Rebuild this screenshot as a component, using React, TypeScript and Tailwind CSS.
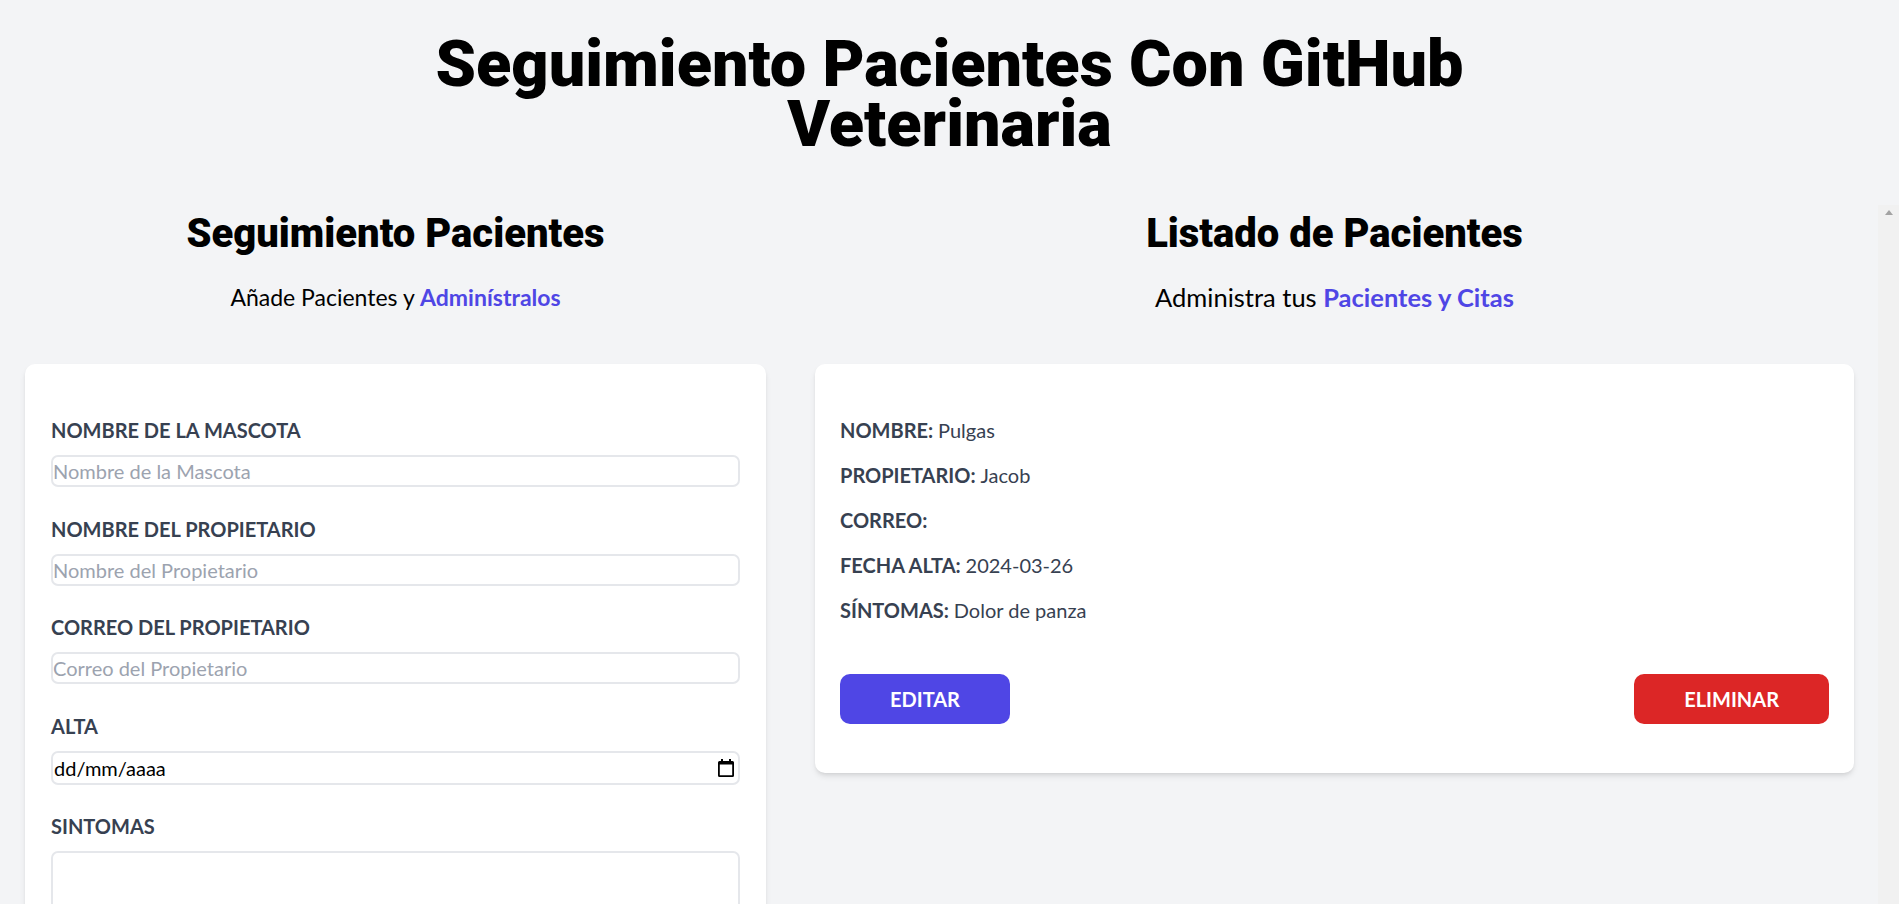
import type { ReactNode } from 'react';

function Field({ label, children, last }: { label: string; children: ReactNode; last?: boolean }) {
  return (
    <div className={last ? '' : 'mb-[27.5px]'}>
      <label className="block h-[29px] text-[20px] leading-[29px] font-bold uppercase text-[#374151]">{label}</label>
      <div className="mt-[10px]">{children}</div>
    </div>
  );
}

function TextInput({ placeholder }: { placeholder: string }) {
  return (
    <input
      type="text"
      placeholder={placeholder}
      className="block h-[32px] w-full rounded-[7px] border-2 border-[#e5e7eb] bg-white px-0 text-[20px] text-black placeholder-[#9ca3af] outline-none"
    />
  );
}

function CalendarIcon() {
  return (
    <svg width="16" height="18" viewBox="0 0 16 18" aria-hidden="true">
      <path
        fillRule="evenodd"
        fill="#000"
        d="M3 0h2v2h6V0h2v2h1.5A1.5 1.5 0 0 1 16 3.5v13a1.5 1.5 0 0 1-1.5 1.5h-13A1.5 1.5 0 0 1 0 16.5v-13A1.5 1.5 0 0 1 1.5 2H3z M1.8 5.5v10.7h12.4V5.5z"
      />
    </svg>
  );
}

function Row({ label, value }: { label: string; value?: string }) {
  return (
    <p className="text-[20px] leading-[29px] text-[#374151]">
      <span className="font-bold uppercase">{label}: </span>
      {value}
    </p>
  );
}

export default function App() {
  return (
    <div className="h-[904px] overflow-hidden bg-[#f3f4f6] font-['Lato',sans-serif] text-black">
      <h1 className="pt-[34px] text-center font-['Roboto',sans-serif] text-[64.8px] leading-[60px] font-black">
        Seguimiento Pacientes Con GitHub
        <br />
        Veterinaria
      </h1>

      <div className="mt-[51px] flex">
        {/* formulario */}
        <div className="w-[791px] shrink-0 px-[25px]">
          <h2 className="pt-[7px] text-center font-['Roboto',sans-serif] text-[40px] leading-[43px] font-black">Seguimiento Pacientes</h2>
          <p className="mt-[25px] text-center text-[23px] leading-[34px]">
            Añade Pacientes y <span className="font-bold text-[#4f46e5]">Adminístralos</span>
          </p>
          <form className="mt-[50px] rounded-[10px] bg-white px-[26px] pt-[52px] pb-12 shadow-md">
            <Field label="Nombre de la Mascota">
              <TextInput placeholder="Nombre de la Mascota" />
            </Field>
            <Field label="Nombre del Propietario">
              <TextInput placeholder="Nombre del Propietario" />
            </Field>
            <Field label="Correo del Propietario">
              <TextInput placeholder="Correo del Propietario" />
            </Field>
            <Field label="Alta">
              <div className="flex h-[34px] w-full items-center justify-between rounded-[7px] border-2 border-[#e5e7eb] bg-white pl-[1px] pr-[4px] text-[20px] text-black">
                <span>dd/mm/aaaa</span>
                <CalendarIcon />
              </div>
            </Field>
            <Field label="Sintomas" last>
              <textarea className="block h-[120px] w-full rounded-[7px] border-2 border-[#e5e7eb] bg-white outline-none" />
            </Field>
          </form>
        </div>

        {/* listado */}
        <div className="flex h-[699px] flex-1">
          <div className="flex-1 px-[24px]">
            <h2 className="pt-[7px] text-center font-['Roboto',sans-serif] text-[40px] leading-[43px] font-black">Listado de Pacientes</h2>
            <p className="mt-[25px] text-center text-[25.5px] leading-[34px]">
              Administra tus <span className="font-bold text-[#4f46e5]">Pacientes y Citas</span>
            </p>
            <div className="mt-[50px] rounded-[10px] bg-white px-[25px] pt-[52px] pb-[49px] shadow-md">
              <div className="flex flex-col gap-[16px]">
                <Row label="Nombre" value="Pulgas" />
                <Row label="Propietario" value="Jacob" />
                <Row label="Correo" />
                <Row label="Fecha Alta" value="2024-03-26" />
                <Row label="Síntomas" value="Dolor de panza" />
              </div>
              <div className="mt-[49px] flex justify-between">
                <button className="h-[50px] rounded-[10px] bg-[#4f46e5] px-[50px] text-[20px] font-bold uppercase text-white">
                  Editar
                </button>
                <button className="h-[50px] rounded-[10px] bg-[#dc2626] px-[50px] text-[20px] font-bold uppercase text-white">
                  Eliminar
                </button>
              </div>
            </div>
          </div>
          {/* scrollbar track */}
          <div className="flex w-[21px] shrink-0 justify-center bg-[#f1f1f1] pt-[5px]">
            <svg width="8" height="5" viewBox="0 0 8 5" aria-hidden="true">
              <path d="M4 0L8 5H0z" fill="#a3a3a3" />
            </svg>
          </div>
        </div>
      </div>
    </div>
  );
}
